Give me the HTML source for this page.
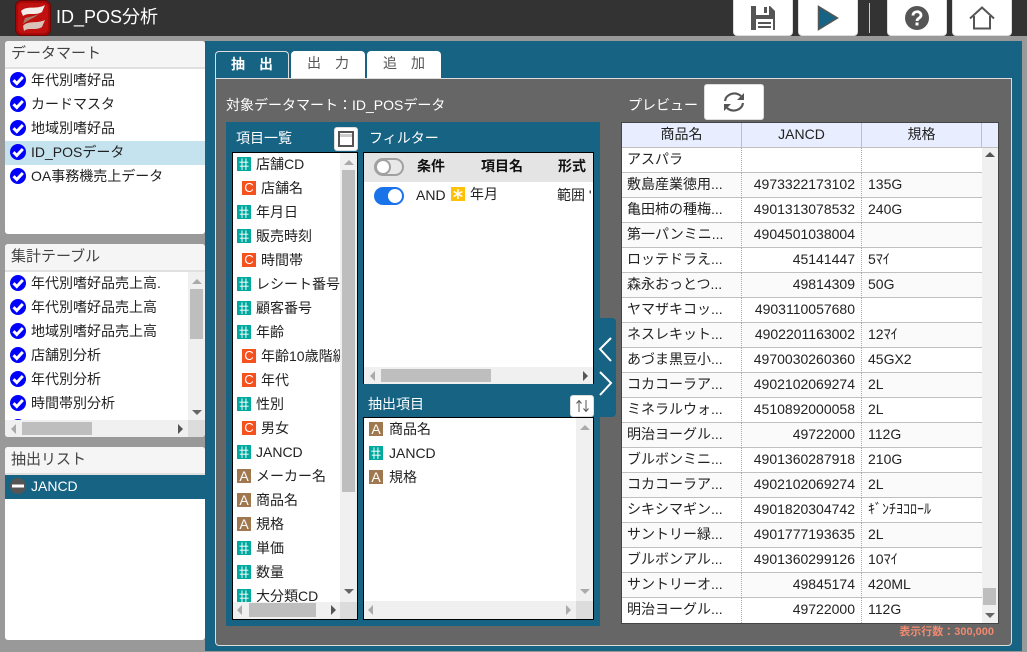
<!DOCTYPE html>
<html lang="ja"><head><meta charset="utf-8"><title>ID_POS分析</title>
<style>
html,body{margin:0;padding:0}
body{width:1027px;height:652px;position:relative;overflow:hidden;background:#999;font-family:"Liberation Sans","Noto Sans CJK JP",sans-serif;font-size:14px;color:#222}
div,span,svg{position:absolute;box-sizing:border-box}
.t{white-space:nowrap;line-height:20px;height:20px}
.top{left:0;top:0;width:1027px;height:36px;background:#333}
.tb{top:0;width:60px;height:36px;background:#fff;border-radius:0 0 4px 4px;border:1px solid #ddd;border-top:0}
.panel{left:5px;width:200px;height:193px;background:#fff;border-radius:3px;overflow:hidden}
.ph{left:0;top:0;width:200px;height:28px;background:#f5f5f5;border-bottom:2px solid #e0e0e0;font-size:15px;color:#444;line-height:26px;padding-left:6px;white-space:nowrap}
.chk{left:5px;width:16px;height:16px}
.sb{background:#f0f0f0}.th{background:#bebebe}.cr{background:#dcdcdc}
.b{width:14px;height:14px;color:#fff;font-size:14px;line-height:14px;text-align:center;font-weight:400;overflow:hidden}
.h{background:#00a99d;font-size:17px;line-height:15px}.c{background:#f4511e;font-size:13px}.a{background:#a07850}.y{background:#ffc107}
.h span{left:0;top:0;width:14px;height:14px;transform:skewX(12deg)}
.tab{top:51px;width:74px;height:27px;background:#fff;border-radius:4px 4px 0 0;text-align:center;line-height:25px;color:#555;font-size:14px;white-space:pre}
.box{background:#fff;border:1px solid #000;overflow:hidden}
.wl{color:#fff;font-size:14px}
.row{left:0;width:360px;height:25px;border-bottom:1px solid #c0c0c0;background:#fff}
.row.e{background:#fafafa}
.cell{top:0;height:23px;line-height:22px;white-space:nowrap;font-size:14px;color:#222}
.c1{left:5px;width:112px;overflow:hidden}.c2{left:121px;width:112px;text-align:right}.c3{left:246px;width:110px}
.v1{left:119px;top:0;width:0;height:25px;border-left:1px dotted #aaa}.v2{left:239px;top:0;width:0;height:25px;border-left:1px dotted #aaa}
.hc{top:0;height:24px;background:#e8eeff;border-right:1px solid #c0c0c0;text-align:center;line-height:23px;font-size:14px;color:#222}
.tri{width:0;height:0;border-style:solid}
.up{border-width:0 5px 5px;border-color:transparent transparent #aaa}
.dn{border-width:5px 5px 0;border-color:#666 transparent transparent}
.lf{border-width:5px 5px 5px 0;border-color:transparent #aaa transparent transparent}
.rt{border-width:5px 0 5px 5px;border-color:transparent transparent transparent #555}
</style></head><body>
<svg width="0" height="0" style="left:0;top:0"><defs>
<symbol id="ck" viewBox="0 0 16 16"><circle cx="8" cy="8" r="8" fill="#0000ff"/><path d="M3.500 8.200 6.800 11.500 12.800 5" fill="none" stroke="#fff" stroke-width="3"/></symbol>
</defs></svg>

<div class="top"></div>
<svg style="left:15px;top:0" width="36" height="36" viewBox="0 0 36 36"><rect x="0.5" y="0.500" width="35" height="35" rx="6" fill="#a80808" stroke="#6d0505"/><rect x="3" y="3" width="30" height="30" rx="4" fill="#c01010"/><path d="M6 11C12 5 21 10 30 5L27 12C21 16 13 12 8 16Z" fill="#f3ece8"/><path d="M24 14C19 18 13 20 8 24L10 18C14 17 19 16 24 14Z" fill="#a87a68"/><path d="M8 26C13 20 22 24 30 20L27 27C21 31 13 27 9 31Z" fill="#d9c3b8"/></svg>
<div class="t" style="left:56px;top:6px;font-size:18px;color:#fff;line-height:22px;height:22px">ID_POS分析</div>

<div class="tb" style="left:733px"></div>
<svg style="left:750px;top:5px" width="26" height="26" viewBox="0 0 26 26"><path d="M1 1H20L25 6V25H1Z" fill="#555"/><rect x="6" y="1" width="13" height="9" fill="#fff"/><rect x="14" y="2" width="3" height="6" fill="#555"/><rect x="6" y="14" width="17" height="11" fill="#fff"/><rect x="8" y="17" width="13" height="2" fill="#555"/><rect x="8" y="21" width="13" height="2" fill="#555"/></svg>
<div class="tb" style="left:798px"></div>
<svg style="left:817px;top:5px" width="22" height="26" viewBox="0 0 22 26"><path d="M1.500 1.500V24.500L20.500 13Z" fill="#176384" stroke="#555" stroke-width="1.500"/></svg>
<div style="left:869px;top:3px;width:1px;height:30px;background:#ccc"></div>
<div class="tb" style="left:887px"></div>
<svg style="left:905px;top:6px" width="24" height="24" viewBox="0 0 24 24"><circle cx="12" cy="12" r="12" fill="#555"/><path d="M8 9.500C8 4.500 16 4.500 16 9.200 16 12.200 12 12 12 15" fill="none" stroke="#fff" stroke-width="2.800"/><rect x="10.500" y="16.500" width="3" height="3" fill="#fff"/></svg>
<div class="tb" style="left:952px"></div>
<svg style="left:969px;top:6px" width="26" height="24" viewBox="0 0 26 24"><path d="M1 12.500 13 1.500 25 12.500M5 10V22.500H21V10" fill="none" stroke="#555" stroke-width="2"/></svg>

<div class="panel" style="top:41px"><div class="ph">データマート</div>
<div style="left:0;top:100px;width:200px;height:24px;background:#c5e3ee"></div>
<svg class="chk" style="top:31px"><use href="#ck"/></svg><div class="t" style="left:26px;top:29px">年代別嗜好品</div>
<svg class="chk" style="top:55px"><use href="#ck"/></svg><div class="t" style="left:26px;top:53px">カードマスタ</div>
<svg class="chk" style="top:79px"><use href="#ck"/></svg><div class="t" style="left:26px;top:77px">地域別嗜好品</div>
<svg class="chk" style="top:103px"><use href="#ck"/></svg><div class="t" style="left:26px;top:101px">ID_POSデータ</div>
<svg class="chk" style="top:127px"><use href="#ck"/></svg><div class="t" style="left:26px;top:125px">OA事務機売上データ</div>
</div>

<div class="panel" style="top:244px"><div class="ph">集計テーブル</div>
<div class="t" style="left:26px;top:29px;width:133px;overflow:hidden">年代別嗜好品売上高.</div>
<svg class="chk" style="top:31px"><use href="#ck"/></svg>
<svg class="chk" style="top:55px"><use href="#ck"/></svg><div class="t" style="left:26px;top:53px">年代別嗜好品売上高</div>
<svg class="chk" style="top:79px"><use href="#ck"/></svg><div class="t" style="left:26px;top:77px">地域別嗜好品売上高</div>
<svg class="chk" style="top:103px"><use href="#ck"/></svg><div class="t" style="left:26px;top:101px">店舗別分析</div>
<svg class="chk" style="top:127px"><use href="#ck"/></svg><div class="t" style="left:26px;top:125px">年代別分析</div>
<svg class="chk" style="top:151px"><use href="#ck"/></svg><div class="t" style="left:26px;top:149px">時間帯別分析</div>
<svg class="chk" style="top:175px"><use href="#ck"/></svg>
<div class="sb" style="left:183px;top:28px;width:17px;height:148px"></div>
<div class="th" style="left:185px;top:45px;width:13px;height:50px"></div>
<div class="tri up" style="left:187px;top:35px"></div><div class="tri dn" style="left:187px;top:166px"></div>
<div class="sb" style="left:0;top:176px;width:183px;height:17px"></div>
<div class="th" style="left:17px;top:178px;width:70px;height:13px"></div>
<div class="tri lf" style="left:6px;top:180px"></div><div class="tri rt" style="left:173px;top:180px"></div>
<div class="cr" style="left:183px;top:176px;width:17px;height:17px"></div>
</div>

<div class="panel" style="top:447px"><div class="ph">抽出リスト</div>
<div style="left:0;top:28px;width:200px;height:24px;background:#176384"></div>
<svg style="left:5px;top:31px" width="16" height="16"><circle cx="8" cy="8" r="8" fill="#555"/><rect x="2" y="6.500" width="12" height="3" fill="#fff"/></svg>
<div class="t" style="left:26px;top:29px;color:#fff">JANCD</div>
</div>

<!-- main -->
<div style="left:205px;top:41px;width:817px;height:610px;background:#176384"></div>
<div style="left:215px;top:78px;width:797px;height:568px;background:#666;border:1px solid #ddd;border-radius:0 0 4px 4px"></div>
<div class="tab" style="left:215px;background:#176384;border:1px solid #ddd;border-bottom:0;color:#fff;font-weight:700">抽　出</div>
<div class="tab" style="left:291px">出　力</div>
<div class="tab" style="left:367px">追　加</div>

<div class="t wl" style="left:226px;top:95px">対象データマート：ID_POSデータ</div>
<div style="left:226px;top:122px;width:374px;height:504px;background:#176384"></div>
<div class="t wl" style="left:236px;top:128px">項目一覧</div>
<div style="left:334px;top:127px;width:24px;height:24px;background:#fff;border-radius:3px;border:1px solid #ddd"></div>
<svg style="left:338px;top:131px" width="16" height="16" viewBox="0 0 16 16"><rect x="1" y="3" width="14" height="3" fill="#ccc"/><rect x="1" y="1" width="14" height="14" fill="none" stroke="#555" stroke-width="2"/></svg>
<div class="t wl" style="left:369px;top:128px">フィルター</div>

<!-- item list -->
<div class="box" style="left:232px;top:152px;width:126px;height:468px">
<div class="b h" style="left:4px;top:4px"><span>#</span></div><div class="t" style="left:23px;top:1px">店舗CD</div>
<div class="b c" style="left:9px;top:28px">C</div><div class="t" style="left:28px;top:25px">店舗名</div>
<div class="b h" style="left:4px;top:52px"><span>#</span></div><div class="t" style="left:23px;top:49px">年月日</div>
<div class="b h" style="left:4px;top:76px"><span>#</span></div><div class="t" style="left:23px;top:73px">販売時刻</div>
<div class="b c" style="left:9px;top:100px">C</div><div class="t" style="left:28px;top:97px">時間帯</div>
<div class="b h" style="left:4px;top:124px"><span>#</span></div><div class="t" style="left:23px;top:121px;width:84px;overflow:hidden">レシート番号</div>
<div class="b h" style="left:4px;top:148px"><span>#</span></div><div class="t" style="left:23px;top:145px">顧客番号</div>
<div class="b h" style="left:4px;top:172px"><span>#</span></div><div class="t" style="left:23px;top:169px">年齢</div>
<div class="b c" style="left:9px;top:196px">C</div><div class="t" style="left:28px;top:193px;width:79px;overflow:hidden">年齢10歳階級</div>
<div class="b c" style="left:9px;top:220px">C</div><div class="t" style="left:28px;top:217px">年代</div>
<div class="b h" style="left:4px;top:244px"><span>#</span></div><div class="t" style="left:23px;top:241px">性別</div>
<div class="b c" style="left:9px;top:268px">C</div><div class="t" style="left:28px;top:265px">男女</div>
<div class="b h" style="left:4px;top:292px"><span>#</span></div><div class="t" style="left:23px;top:289px">JANCD</div>
<div class="b a" style="left:4px;top:316px">A</div><div class="t" style="left:23px;top:313px">メーカー名</div>
<div class="b a" style="left:4px;top:340px">A</div><div class="t" style="left:23px;top:337px">商品名</div>
<div class="b a" style="left:4px;top:364px">A</div><div class="t" style="left:23px;top:361px">規格</div>
<div class="b h" style="left:4px;top:388px"><span>#</span></div><div class="t" style="left:23px;top:385px">単価</div>
<div class="b h" style="left:4px;top:412px"><span>#</span></div><div class="t" style="left:23px;top:409px">数量</div>
<div class="b h" style="left:4px;top:436px"><span>#</span></div><div class="t" style="left:23px;top:433px">大分類CD</div>
<div class="sb" style="left:107px;top:0;width:17px;height:449px"></div>
<div class="th" style="left:109px;top:17px;width:13px;height:322px"></div>
<div class="tri up" style="left:111px;top:7px"></div><div class="tri dn" style="left:111px;top:436px"></div>
<div class="sb" style="left:0;top:449px;width:107px;height:17px"></div>
<div class="th" style="left:16px;top:450px;width:67px;height:14px"></div>
<div class="tri lf" style="left:4px;top:452px"></div><div class="tri rt" style="left:98px;top:452px"></div>
<div class="cr" style="left:107px;top:449px;width:17px;height:17px"></div>
</div>

<!-- filter -->
<div class="box" style="left:363px;top:152px;width:231px;height:232px;border-bottom:0">
<div style="left:0;top:0;width:229px;height:29px;background:#e4e4e4"></div>
<div style="left:10px;top:5px;width:30px;height:18px;border-radius:9px;background:#e8e8e8;border:2px solid #a0a0a0"></div>
<div style="left:11px;top:6px;width:16px;height:16px;border-radius:8px;background:#fff;border:2px solid #a0a0a0"></div>
<div class="t" style="left:53px;top:3px;font-weight:700;color:#111">条件</div>
<div class="t" style="left:117px;top:3px;font-weight:700;color:#111">項目名</div>
<div class="t" style="left:194px;top:3px;font-weight:700;color:#111">形式</div>
<div style="left:10px;top:34px;width:30px;height:18px;border-radius:9px;background:#1a73e8"></div>
<div style="left:24px;top:36px;width:14px;height:14px;border-radius:7px;background:#fff"></div>
<div class="t" style="left:52px;top:32px">AND</div>
<svg style="left:87px;top:34px" width="14" height="14" viewBox="0 0 14 14"><rect width="14" height="14" fill="#ffc107"/><path d="M7 2V12M2.700 4.500 11.300 9.500M2.700 9.500 11.300 4.500" stroke="#fff" stroke-width="1.500"/></svg>
<div class="t" style="left:106px;top:31px">年月</div>
<div class="t" style="left:193px;top:32px;width:36px;overflow:hidden">範囲 '</div>
<div class="sb" style="left:0;top:214px;width:229px;height:18px"></div>
<div class="th" style="left:17px;top:216px;width:110px;height:13px"></div>
<div class="tri lf" style="left:6px;top:218px"></div><div class="tri rt" style="left:219px;top:218px"></div>
</div>

<div class="t wl" style="left:368px;top:394px">抽出項目</div>
<div style="left:570px;top:395px;width:24px;height:22px;background:#fff;border-radius:3px;border:1px solid #ddd"></div>
<svg style="left:575px;top:399px" width="15" height="14" viewBox="0 0 15 14"><path d="M4 13V2M1.500 4.500 4 1.500 6.500 4.500M11 1V12M8.500 9.500 11 12.500 13.500 9.500" fill="none" stroke="#555" stroke-width="1"/></svg>

<div class="box" style="left:363px;top:417px;width:231px;height:203px">
<div class="b a" style="left:5px;top:4px">A</div><div class="t" style="left:25px;top:1px">商品名</div>
<div class="b h" style="left:5px;top:28px"><span>#</span></div><div class="t" style="left:25px;top:25px">JANCD</div>
<div class="b a" style="left:5px;top:52px">A</div><div class="t" style="left:25px;top:49px">規格</div>
<div class="sb" style="left:212px;top:0;width:17px;height:183px"></div>
<div class="tri up" style="left:216px;top:7px"></div><div class="tri dn" style="left:216px;top:171px;border-top-color:#aaa"></div>
<div class="sb" style="left:0;top:183px;width:212px;height:18px"></div>
<div class="tri lf" style="left:4px;top:187px"></div><div class="tri rt" style="left:202px;top:187px;border-left-color:#aaa"></div>
<div class="cr" style="left:212px;top:183px;width:17px;height:18px"></div>
</div>

<div style="left:600px;top:318px;width:16px;height:99px;background:#176384;border-radius:0 4px 4px 0"></div>
<svg style="left:598px;top:336px" width="16" height="60" viewBox="0 0 16 60"><path d="M13 2 2 13 13 25M2 36 13 47 2 59" fill="none" stroke="#fff" stroke-width="2"/></svg>

<!-- preview -->
<div class="t wl" style="left:628px;top:95px">プレビュー</div>
<div style="left:704px;top:84px;width:60px;height:36px;background:#fff;border-radius:3px;border:1px solid #ddd"></div>
<svg style="left:722px;top:90px" width="24" height="24" viewBox="0 0 24 24"><path d="M3 11C4 4 13 1 19 6M21 13C20 20 11 23 5 18" fill="none" stroke="#555" stroke-width="2.200"/><path d="M22 3V10H15ZM2 21V14H9Z" fill="#555"/></svg>

<div style="left:621px;top:122px;width:378px;height:502px;background:#fff;border:1px solid #444;overflow:hidden">
<div class="hc" style="left:0;width:120px">商品名</div>
<div class="hc" style="left:120px;width:120px">JANCD</div>
<div class="hc" style="left:240px;width:120px">規格</div>
<div class="hc" style="left:360px;width:16px;border-right:0"></div>
<div style="left:0;top:24px;width:376px;height:2px;background:#c0c0c0"></div>

<div class="row" style="top:25px"><div class="cell c1">アスパラ</div><div class="v1"></div><div class="v2"></div></div>
<div class="row e" style="top:50px"><div class="cell c1">敷島産業徳用...</div><div class="cell c2">4973322173102</div><div class="cell c3">135G</div><div class="v1"></div><div class="v2"></div></div>
<div class="row" style="top:75px"><div class="cell c1">亀田柿の種梅...</div><div class="cell c2">4901313078532</div><div class="cell c3">240G</div><div class="v1"></div><div class="v2"></div></div>
<div class="row e" style="top:100px"><div class="cell c1">第一パンミニ...</div><div class="cell c2">4904501038004</div><div class="v1"></div><div class="v2"></div></div>
<div class="row" style="top:125px"><div class="cell c1">ロッテドラえ...</div><div class="cell c2">45141447</div><div class="cell c3">5ﾏｲ</div><div class="v1"></div><div class="v2"></div></div>
<div class="row e" style="top:150px"><div class="cell c1">森永おっとつ...</div><div class="cell c2">49814309</div><div class="cell c3">50G</div><div class="v1"></div><div class="v2"></div></div>
<div class="row" style="top:175px"><div class="cell c1">ヤマザキコッ...</div><div class="cell c2">4903110057680</div><div class="v1"></div><div class="v2"></div></div>
<div class="row e" style="top:200px"><div class="cell c1">ネスレキット...</div><div class="cell c2">4902201163002</div><div class="cell c3">12ﾏｲ</div><div class="v1"></div><div class="v2"></div></div>
<div class="row" style="top:225px"><div class="cell c1">あづま黒豆小...</div><div class="cell c2">4970030260360</div><div class="cell c3">45GX2</div><div class="v1"></div><div class="v2"></div></div>
<div class="row e" style="top:250px"><div class="cell c1">コカコーラア...</div><div class="cell c2">4902102069274</div><div class="cell c3">2L</div><div class="v1"></div><div class="v2"></div></div>
<div class="row" style="top:275px"><div class="cell c1">ミネラルウォ...</div><div class="cell c2">4510892000058</div><div class="cell c3">2L</div><div class="v1"></div><div class="v2"></div></div>
<div class="row e" style="top:300px"><div class="cell c1">明治ヨーグル...</div><div class="cell c2">49722000</div><div class="cell c3">112G</div><div class="v1"></div><div class="v2"></div></div>
<div class="row" style="top:325px"><div class="cell c1">ブルボンミニ...</div><div class="cell c2">4901360287918</div><div class="cell c3">210G</div><div class="v1"></div><div class="v2"></div></div>
<div class="row e" style="top:350px"><div class="cell c1">コカコーラア...</div><div class="cell c2">4902102069274</div><div class="cell c3">2L</div><div class="v1"></div><div class="v2"></div></div>
<div class="row" style="top:375px"><div class="cell c1">シキシマギン...</div><div class="cell c2">4901820304742</div><div class="cell c3">ｷﾞﾝﾁﾖｺﾛｰﾙ</div><div class="v1"></div><div class="v2"></div></div>
<div class="row e" style="top:400px"><div class="cell c1">サントリー緑...</div><div class="cell c2">4901777193635</div><div class="cell c3">2L</div><div class="v1"></div><div class="v2"></div></div>
<div class="row" style="top:425px"><div class="cell c1">ブルボンアル...</div><div class="cell c2">4901360299126</div><div class="cell c3">10ﾏｲ</div><div class="v1"></div><div class="v2"></div></div>
<div class="row e" style="top:450px"><div class="cell c1">サントリーオ...</div><div class="cell c2">49845174</div><div class="cell c3">420ML</div><div class="v1"></div><div class="v2"></div></div>
<div class="row" style="top:475px;border-bottom:0"><div class="cell c1">明治ヨーグル...</div><div class="cell c2">49722000</div><div class="cell c3">112G</div><div class="v1"></div><div class="v2"></div></div>

<div class="sb" style="left:360px;top:25px;width:16px;height:475px"></div>
<div class="th" style="left:361px;top:465px;width:13px;height:17px"></div>
<div class="tri up" style="left:363px;top:29px;border-bottom-color:#555"></div><div class="tri dn" style="left:363px;top:490px"></div>
</div>
<div class="t" style="left:870px;top:622px;width:124px;text-align:right;color:#f08a70;font-size:11px;font-weight:700">表示行数：300,000</div>
</body></html>
